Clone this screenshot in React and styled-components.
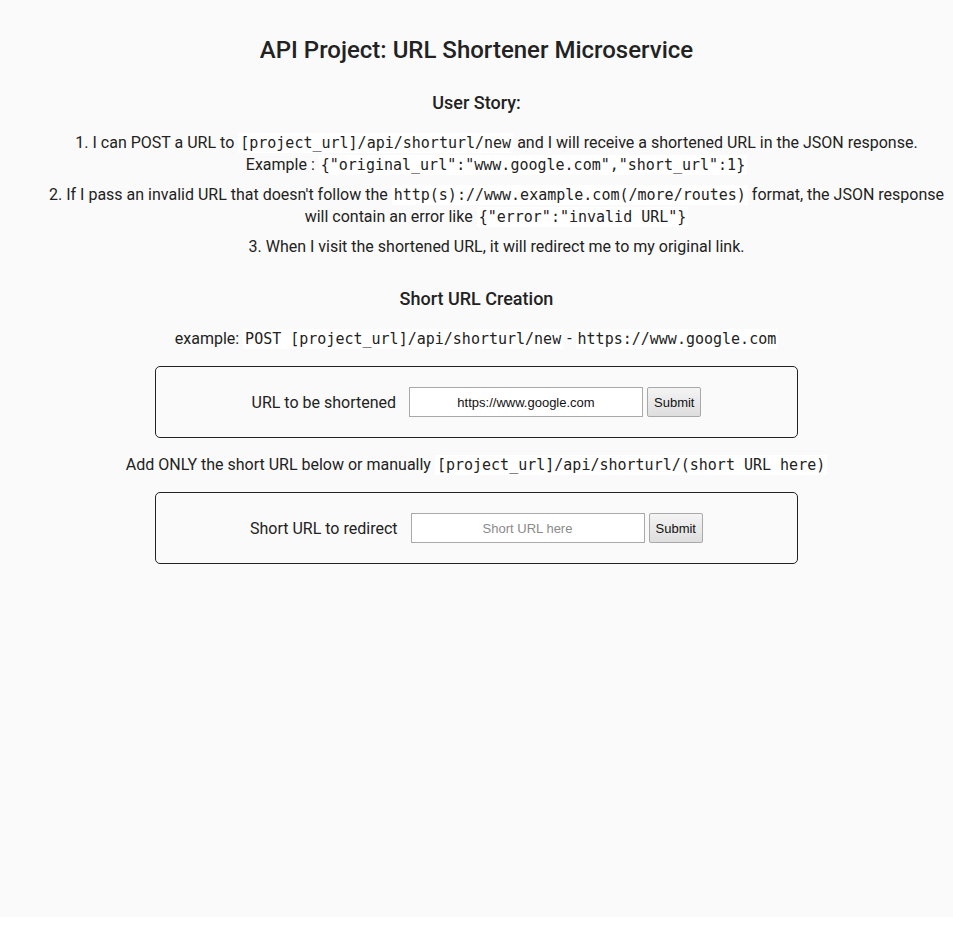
import React from "react";
import styled, { createGlobalStyle } from "styled-components";

const GlobalStyle = createGlobalStyle`
	html {
		background: #ffffff;
	}
	body {
		margin: 0;
		font-family: Roboto, "Liberation Sans", Arial, sans-serif;
		color: #222222;
	}
`;

const Page = styled.div`
	height: 917px;
	background: #fafafa;
	padding-top: 34px;
	box-sizing: border-box;
	text-align: center;
`;

const Title = styled.h1`
	margin: 0 0 25px;
	font-size: 24px;
	font-weight: 500;
	line-height: 32px;
	color: #222222;
`;

const SubTitle = styled.h3`
	margin: 0 0 ${(p) => p.gap || 18}px;
	font-size: 18px;
	font-weight: 500;
	line-height: 24px;
`;

const Stories = styled.ol`
	margin: 0 0 29px;
	padding: 0 0 0 40px;
	list-style: decimal inside;
`;

const Story = styled.li`
	font-size: 16px;
	line-height: 22px;
	margin-bottom: 8px;
`;

const Code = styled.code`
	font-family: "DejaVu Sans Mono", "Liberation Mono", monospace;
	font-size: 15px;
	background: #ffffff;
	padding: 1px 2px;
`;

const Example = styled.p`
	margin: 0 0 ${(p) => p.gap || 16}px;
	font-size: 16px;
	line-height: 22px;
`;

const FormBox = styled.form`
	width: 643px;
	height: 72px;
	margin: 0 auto ${(p) => p.gap || 0}px;
	box-sizing: border-box;
	border: 1px solid #222222;
	border-radius: 5px;
	display: flex;
	align-items: center;
	justify-content: center;
`;

const Label = styled.label`
	font-size: 16px;
	margin-right: 13px;
`;

const Input = styled.input`
	width: 234px;
	height: 30px;
	box-sizing: border-box;
	border: 1px solid #a9a9a9;
	background: #ffffff;
	font-family: "Liberation Sans", Arial, sans-serif;
	font-size: 13px;
	text-align: center;
	color: #111111;
	&::placeholder {
		color: #8a8a8a;
	}
`;

const Button = styled.button`
	margin-left: 4px;
	height: 30px;
	padding: 0 6px;
	box-sizing: border-box;
	border: 1px solid #a9a9a9;
	border-radius: 2px;
	background: linear-gradient(#f4f4f4, #dedede);
	font-family: "Liberation Sans", Arial, sans-serif;
	font-size: 13px;
	color: #111111;
`;

export default function App() {
	return (
		<>
			<GlobalStyle />
			<Page>
				<Title>API Project: URL Shortener Microservice</Title>
				<SubTitle gap={17}>User Story:</SubTitle>
				<Stories>
					<Story>
						I can POST a URL to <Code>[project_url]/api/shorturl/new</Code> and I
						will receive a shortened URL in the JSON response.
						<br />
						Example : <Code>{'{"original_url":"www.google.com","short_url":1}'}</Code>
					</Story>
					<Story>
						If I pass an invalid URL that doesn't follow the{" "}
						<Code>http(s)://www.example.com(/more/routes)</Code> format, the JSON
						response will contain an error like{" "}
						<Code>{'{"error":"invalid URL"}'}</Code>
					</Story>
					<Story>
						When I visit the shortened URL, it will redirect me to my original
						link.
					</Story>
				</Stories>
				<SubTitle gap={17}>Short URL Creation</SubTitle>
				<Example gap={16}>
					example: <Code>POST [project_url]/api/shorturl/new</Code> -{" "}
					<Code>https://www.google.com</Code>
				</Example>
				<FormBox gap={16} onSubmit={(e) => e.preventDefault()}>
					<Label htmlFor="url_input">URL to be shortened</Label>
					<Input id="url_input" type="text" defaultValue="https://www.google.com" />
					<Button type="submit">Submit</Button>
				</FormBox>
				<Example gap={16}>
					Add ONLY the short URL below or manually{" "}
					<Code>[project_url]/api/shorturl/(short URL here)</Code>
				</Example>
				<FormBox onSubmit={(e) => e.preventDefault()}>
					<Label htmlFor="short_input">Short URL to redirect</Label>
					<Input id="short_input" type="text" placeholder="Short URL here" />
					<Button type="submit">Submit</Button>
				</FormBox>
			</Page>
		</>
	);
}
